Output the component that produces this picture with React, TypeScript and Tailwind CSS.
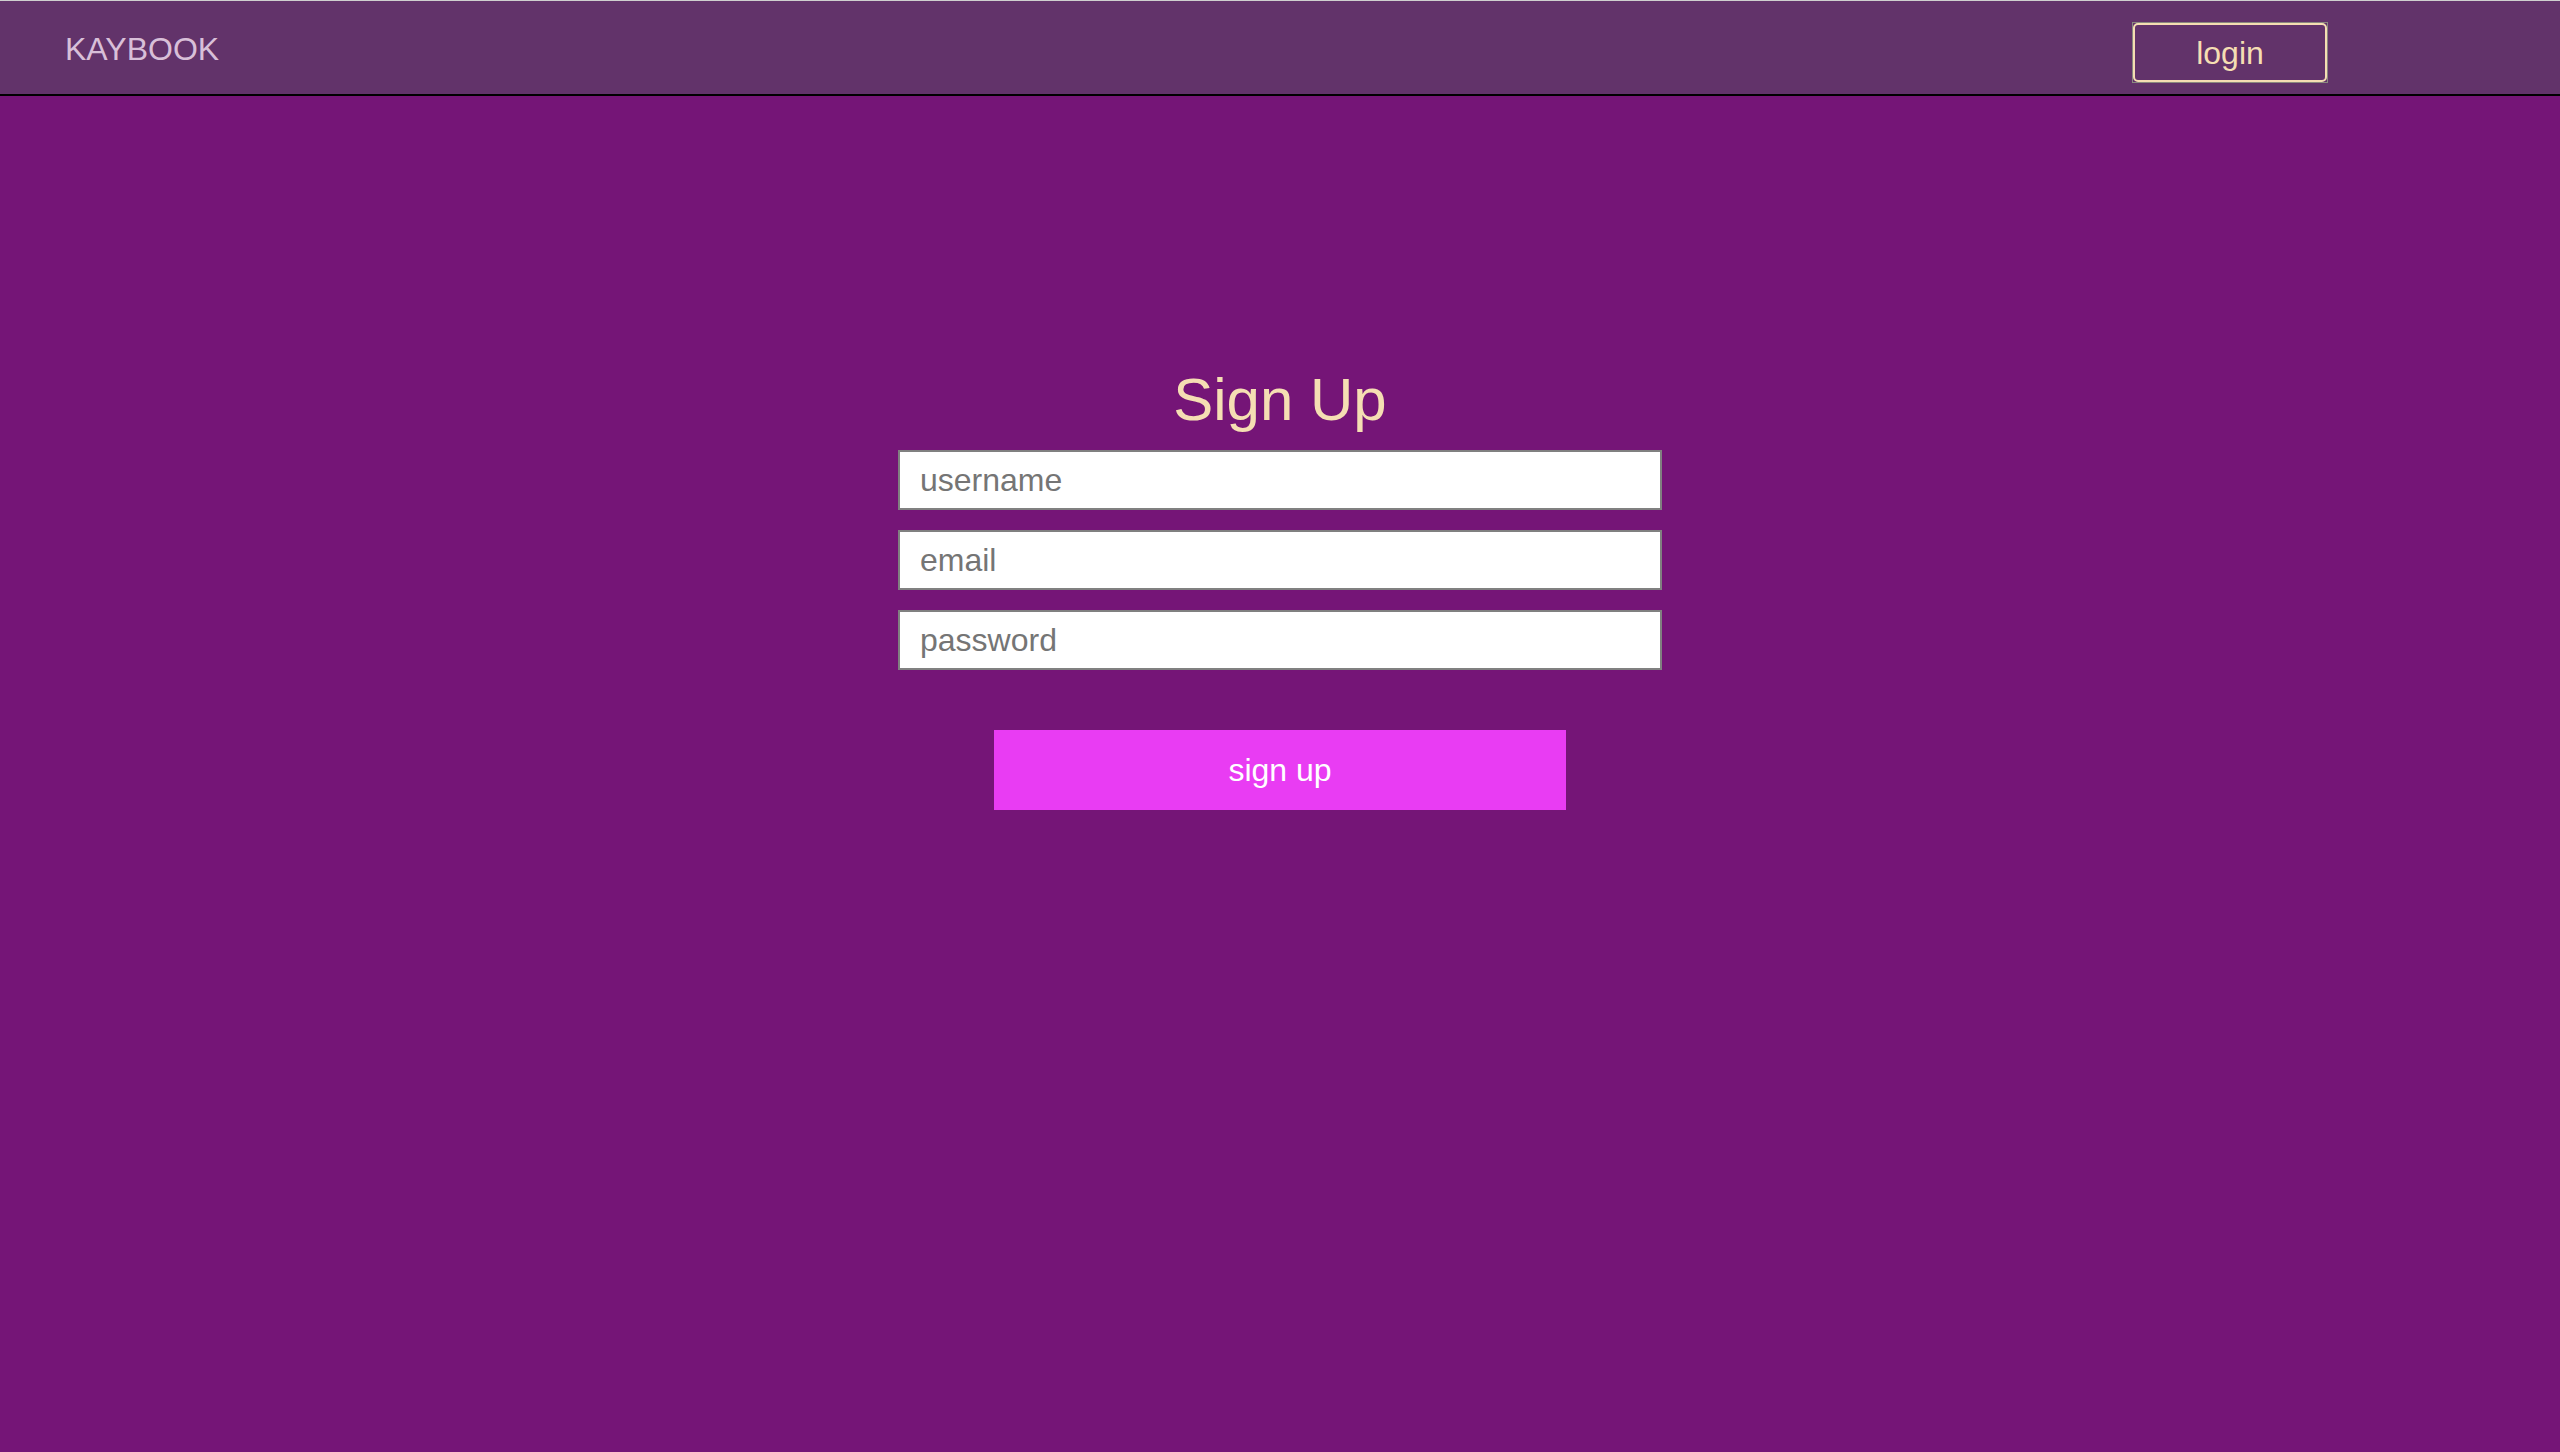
import React from "react";

export default function App() {
  const font = { fontFamily: '"Liberation Sans", Arial, Helvetica, sans-serif' };
  return (
    <div className="min-h-[1452px] w-full bg-[#751577]" style={font}>
      <header className="flex h-[96px] border-t border-t-[#cfcfcf] border-b-2 border-b-black bg-[#62336a]">
        <div className="ml-[65px] mt-[32px] self-start text-[32px] leading-none text-[#d8bfd8]">
          KAYBOOK
        </div>
        <div className="ml-auto mr-[232px] mt-[21px] self-start border border-[#8a8a80]">
          <button className="flex h-[59px] w-[194px] items-center justify-center rounded-[5px] border-2 border-[#f5deb3] bg-transparent text-[32px] leading-none text-[#f5deb3]">
            login
          </button>
        </div>
      </header>
      <main className="flex flex-col items-center pt-[274px]">
        <h1 className="mb-[20px] h-[60px] text-[60px] font-normal leading-none text-[#f5deb3]">
          Sign Up
        </h1>
        <div className="flex flex-col gap-[20px]">
          <input
            className="h-[60px] w-[764px] border-2 border-[#808080] bg-white px-[20px] text-[32px] text-[#333] placeholder:text-[#757575] outline-none"
            placeholder="username"
          />
          <input
            className="h-[60px] w-[764px] border-2 border-[#808080] bg-white px-[20px] text-[32px] text-[#333] placeholder:text-[#757575] outline-none"
            placeholder="email"
          />
          <input
            type="password"
            className="h-[60px] w-[764px] border-2 border-[#808080] bg-white px-[20px] text-[32px] text-[#333] placeholder:text-[#757575] outline-none"
            placeholder="password"
          />
        </div>
        <button className="mt-[60px] flex h-[80px] w-[572px] items-center justify-center bg-[#e93cf3] text-[32px] leading-none text-white">
          sign up
        </button>
      </main>
    </div>
  );
}
